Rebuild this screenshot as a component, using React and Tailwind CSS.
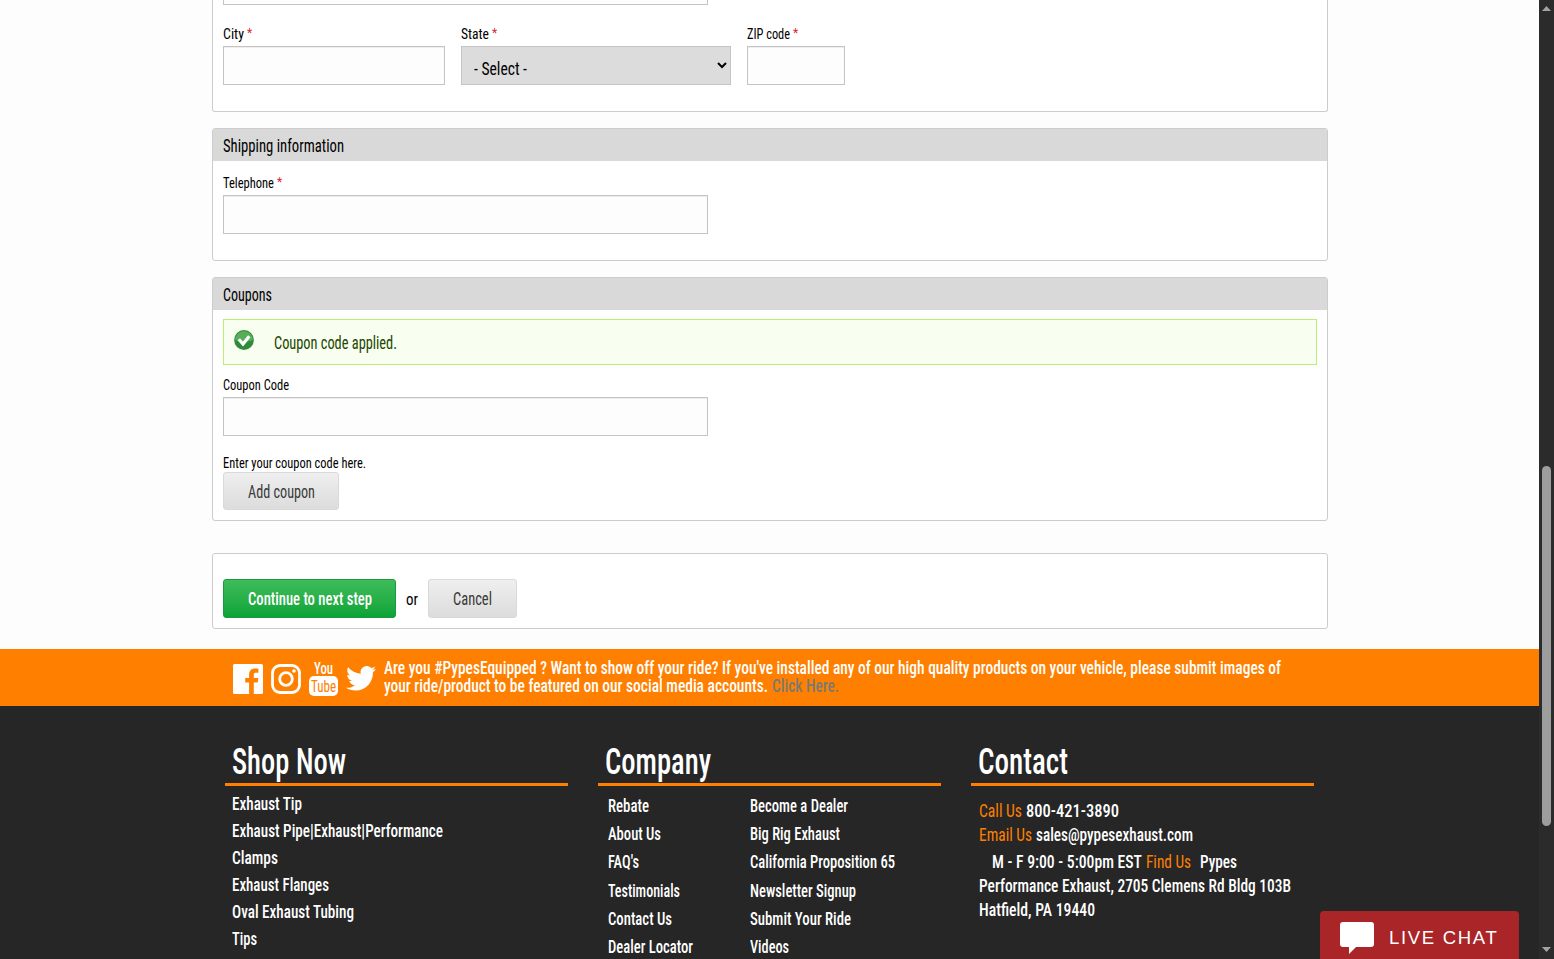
import React, { useLayoutEffect, useRef } from "react";

// Condensed text: fits its content into a width of `w` pixels
const Text = ({ w, className = "", children }) => {
  const inner = useRef(null);

  useLayoutEffect(() => {
    const el = inner.current;
    const fit = () => {
      el.style.transform = "none";
      el.style.transform = `scaleX(${w / el.getBoundingClientRect().width})`;
    };
    fit();
    document.fonts.ready.then(fit);
  }, [w]);

  return (
    <span className={`inline-block shrink-0 whitespace-pre ${className}`} style={{ width: w }}>
      <span ref={inner} className="inline-block origin-left">{children}</span>
    </span>
  );
};

const Label = ({ w, required, children }) => (
  <div className="flex h-6 items-center gap-[3px] pt-[2px] text-[14.5px] leading-6 text-black">
    <Text w={w}>{children}</Text>
    {required && <span className="pb-1 text-[12px] leading-5 text-[#d8232f]">*</span>}
  </div>
);

const Input = ({ className = "w-[485px]" }) => (
  <input
    type="text"
    className={`block h-[39px] border border-[#c4c4c4] bg-[#fdfdfd] px-3 shadow-[inset_0_1px_1px_rgba(0,0,0,0.07)] outline-none ${className}`}
  />
);

const PanelHeader = ({ w, children }) => (
  <div className="h-8 bg-[#d9d9d9] pl-[10px] text-[17.5px] leading-[34px] text-black">
    <Text w={w}>{children}</Text>
  </div>
);

const Button = ({ w, className = "", children }) => (
  <button
    className={`flex items-center justify-center rounded-[3px] border border-[#d9d9d9] bg-linear-to-b from-[#efefef] to-[#dcdcdc] pt-px text-[17.5px] leading-6 text-[#3a3a3a] ${className}`}
  >
    <Text w={w}>{children}</Text>
  </button>
);

const FooterColumn = ({ title, w, children }) => (
  <div className="w-[343px]">
    <h3 className="h-[80px] border-b-3 border-[#ff8000] pt-[34px] pl-[7px] text-[36px] leading-[44px] font-medium">
      <Text w={w}>{title}</Text>
    </h3>
    {children}
  </div>
);

const shopLinks = [
  { name: "Exhaust Tip", w: 70 },
  { name: "Exhaust Pipe|Exhaust|Performance", w: 211 },
  { name: "Clamps", w: 46 },
  { name: "Exhaust Flanges", w: 97 },
  { name: "Oval Exhaust Tubing", w: 122 },
  { name: "Tips", w: 25 },
];

const companyLinks = [
  { name: "Rebate", w: 41 },
  { name: "Become a Dealer", w: 98 },
  { name: "About Us", w: 53 },
  { name: "Big Rig Exhaust", w: 90 },
  { name: "FAQ's", w: 31 },
  { name: "California Proposition 65", w: 145 },
  { name: "Testimonials", w: 72 },
  { name: "Newsletter Signup", w: 106 },
  { name: "Contact Us", w: 64 },
  { name: "Submit Your Ride", w: 101 },
  { name: "Dealer Locator", w: 85 },
  { name: "Videos", w: 39 },
];

const SocialIcons = () => (
  <div className="flex h-[57px] items-center gap-[7.66px] pt-[2px] text-white">
    <svg width="30" height="30" viewBox="0 0 30 30" fill="currentColor">
      <path d="M1.5 0h27A1.5 1.5 0 0 1 30 1.500v27a1.500 1.500 0 0 1-1.500 1.500h-7.700V18.400h3.900l.6-4.500h-4.500V11c0-1.300.4-2.200 2.200-2.200h2.400v-4c-.4-.1-1.800-.2-3.500-.2-3.400 0-5.800 2.100-5.800 6v3.300h-3.900v4.500h3.900V30H1.500A1.500 1.500 0 0 1 0 28.500v-27A1.500 1.500 0 0 1 1.500 0z" />
    </svg>
    <svg width="30" height="30" viewBox="0 0 30 30" fill="none" stroke="currentColor" strokeWidth="2.800">
      <rect x="1.500" y="1.500" width="27" height="27" rx="7.500" />
      <circle cx="15" cy="15" r="6.300" />
      <circle cx="23" cy="7" r="1.800" fill="currentColor" stroke="none" />
    </svg>
    <div className="flex h-[36px] w-[30px] flex-col items-center font-medium">
      <span className="h-[15px] text-[17px] leading-[15px]"><Text w={19}>You</Text></span>
      <span className="h-5 w-[29px] rounded-[5px] bg-white pl-[2px] text-[17px] leading-[21px] font-normal text-[#ff8000]"><Text w={25}>Tube</Text></span>
    </div>
    <svg width="30" height="25" viewBox="0 0 30 25" fill="currentColor">
      <path d="M30 3c-1.100.5-2.300.8-3.500 1 1.300-.8 2.200-2 2.700-3.400-1.200.7-2.500 1.200-3.900 1.500A6.150 6.150 0 0 0 14.800 7.700c-5.100-.3-9.600-2.700-12.700-6.400C.5 4 1.300 7.600 4 9.500c-1 0-2-.3-2.800-.8 0 2.900 2.100 5.500 4.900 6.100-.9.200-1.800.3-2.800.1.800 2.400 3.100 4.200 5.700 4.300C6.500 21.100 3.300 22.100 0 21.700 2.700 23.500 6 24.500 9.400 24.500c11.500 0 17.900-9.600 17.500-18.300C28.100 5.300 29.200 4.200 30 3z" />
    </svg>
  </div>
);

const App = () => {
  return (
    <div className="flex h-screen overflow-hidden bg-[#fdfdfd] font-['Roboto','Liberation_Sans',sans-serif] [font-stretch:75%]">
      <div className="flex min-w-0 flex-1 flex-col">
        <main className="ml-[212px] h-[649px] w-[1116px] shrink-0">
          {/* Billing address */}
          <section className="h-[112px] rounded-b-[3px] border border-t-0 border-[#ccc] bg-white px-[10px]">
            <div className="h-[5px] w-[485px] border border-t-0 border-[#c4c4c4] bg-[#fdfdfd]" />
            <div className="flex gap-4 pt-[17px]">
              <div>
                <Label w={21} required>City</Label>
                <Input className="w-[222px]" />
              </div>
              <div>
                <Label w={28} required>State</Label>
                <div className="flex h-[39px] w-[270px] items-center justify-between border border-[#c4c4c4] bg-[#dcdcdc] pr-[3px] pl-3 text-[17.5px] leading-6 text-black">
                  <Text w={53} className="pt-[6px]">- Select -</Text>
                  <svg width="10" height="7" viewBox="0 0 10 7" fill="none" stroke="currentColor" strokeWidth="2">
                    <path d="M1 1l4 4 4-4" />
                  </svg>
                </div>
              </div>
              <div>
                <Label w={43} required>ZIP code</Label>
                <Input className="w-[98px]" />
              </div>
            </div>
          </section>

          <section className="mt-4 h-[133px] overflow-hidden rounded-[3px] border border-[#ccc] bg-white">
            <PanelHeader w={121}>Shipping information</PanelHeader>
            <div className="px-[10px] pt-[10px]">
              <Label w={51} required>Telephone</Label>
              <Input />
            </div>
          </section>

          <section className="mt-4 h-[244px] overflow-hidden rounded-[3px] border border-[#ccc] bg-white">
            <PanelHeader w={49}>Coupons</PanelHeader>
            <div className="px-[10px] pt-[9px]">
              <div className="flex h-[46px] items-center border border-[#be7] bg-[#f8fff0] pl-[10px] text-[17.5px] leading-6 text-[#234600]">
                <svg className="mr-[19px] mb-1" width="21" height="21" viewBox="0 0 21 21">
                  <circle cx="10" cy="10" r="9.900" fill="#2f8b39" />
                  <path d="M1 10a9 9 0 0 1 18 0c-5 2-12 2-18 0z" fill="#57ad58" />
                  <path d="M4.800 9.300l4.200 4.700 6.300-7.700" fill="none" stroke="#fff" strokeWidth="3.200" />
                </svg>
                <Text w={123} className="pt-px">Coupon code applied.</Text>
              </div>
              <div className="pt-2">
                <Label w={66}>Coupon Code</Label>
                <Input />
              </div>
              <div className="h-9 pt-[15px]">
                <Label w={143}>Enter your coupon code here.</Label>
              </div>
              <Button w={67} className="h-[38px] w-[116px]">Add coupon</Button>
            </div>
          </section>

          <section className="mt-8 flex h-[76px] gap-[10px] rounded-[3px] border border-[#ccc] bg-white px-[10px] pt-[25px]">
            <button className="flex h-[39px] w-[173px] items-center justify-center rounded-[3px] border border-[#1a9a3c] bg-linear-to-b from-[#3dbd5b] to-[#08a336] text-[17.5px] leading-6 font-medium text-white">
              <Text w={124}>Continue to next step</Text>
            </button>
            <span className="text-[17px] leading-[40px] text-black"><Text w={12}>or</Text></span>
            <Button w={39} className="h-[39px] w-[89px] pb-px">Cancel</Button>
          </section>
        </main>

        <div className="flex h-[57px] shrink-0 gap-[8px] bg-[#ff8000] pl-[233px]">
          <SocialIcons />
          <p className="pt-[10px] text-[18px] leading-[18px] font-medium text-white">
            <Text w={897}>Are you #PypesEquipped ? Want to show off your ride? If you've installed any of our high quality products on your vehicle, please submit images of</Text>
            <span className="flex gap-1">
              <Text w={384}>your ride/product to be featured on our social media accounts.</Text>
              <a href="#" className="text-[#7b7a70]"><Text w={67}>Click Here.</Text></a>
            </span>
          </p>
        </div>

        <footer className="flex h-[253px] shrink-0 gap-[30px] overflow-hidden bg-[#262626] pl-[225px] text-white">
          <FooterColumn title="Shop Now" w={114}>
            <ul className="pt-[4px] pl-[7px] text-[18px] leading-[27px] font-medium">
              {shopLinks.map((link) => (
                <li key={link.name} className="h-[27px]"><Text w={link.w}>{link.name}</Text></li>
              ))}
            </ul>
          </FooterColumn>

          <FooterColumn title="Company" w={106}>
            <ul className="grid grid-cols-[142px_1fr] pt-[6px] pl-[9.5px] text-[17.5px] leading-[28.2px] font-medium">
              {companyLinks.map((link) => (
                <li key={link.name} className="h-[28.2px]"><Text w={link.w}>{link.name}</Text></li>
              ))}
            </ul>
          </FooterColumn>

          <FooterColumn title="Contact" w={90}>
            <div className="pt-[13px] pl-2 text-[18.5px] leading-6 font-medium">
              <div className="flex h-6 gap-1">
                <Text w={43} className="font-normal text-[#ff8000]">Call Us</Text>
                <Text w={93}>800-421-3890</Text>
              </div>
              <div className="flex h-[27px] gap-1">
                <Text w={53} className="font-normal text-[#ff8000]">Email Us</Text>
                <Text w={157}>sales@pypesexhaust.com</Text>
              </div>
              <div className="flex h-6 gap-1 pl-[13px]">
                <Text w={150}>M - F 9:00 - 5:00pm EST</Text>
                <Text w={45} className="font-normal text-[#ff8000]">Find Us</Text>
                <Text w={37} className="ml-[5px]">Pypes</Text>
              </div>
              <div className="h-6"><Text w={312}>Performance Exhaust, 2705 Clemens Rd Bldg 103B</Text></div>
              <div className="h-6"><Text w={116}>Hatfield, PA 19440</Text></div>
            </div>
          </FooterColumn>
        </footer>
      </div>

      {/* Scrollbar */}
      <div className="flex w-[15px] shrink-0 flex-col items-center bg-[#2b2b2b]">
        <svg className="mt-[6px]" width="9" height="5" viewBox="0 0 9 5" fill="#a3a3a3"><path d="M0 5l4.500-5L9 5z" /></svg>
        <div className="mt-[455px] h-[360px] w-[9px] rounded-full bg-[#9d9d9d]" />
        <svg className="mt-auto mb-[7px]" width="9" height="5" viewBox="0 0 9 5" fill="#a3a3a3"><path d="M0 0l4.500 5L9 0z" /></svg>
      </div>

      {/* Chat widget over the page */}
      <button className="fixed right-[35px] bottom-0 flex h-12 w-[199px] items-center rounded-t-[4px] bg-[#a92528] pl-5 text-white">
        <svg className="mt-[6px]" width="34" height="32" viewBox="0 0 34 32" fill="currentColor">
          <path d="M3 0h28a3 3 0 0 1 3 3v19a3 3 0 0 1-3 3H16l-7 7v-7H3a3 3 0 0 1-3-3V3a3 3 0 0 1 3-3z" />
        </svg>
        <span className="ml-[15px] pt-[5px] font-['Liberation_Sans',Arial,sans-serif] text-[18.5px] leading-6 tracking-[1.700px] whitespace-nowrap">LIVE CHAT</span>
      </button>
    </div>
  );
};

export default App;
